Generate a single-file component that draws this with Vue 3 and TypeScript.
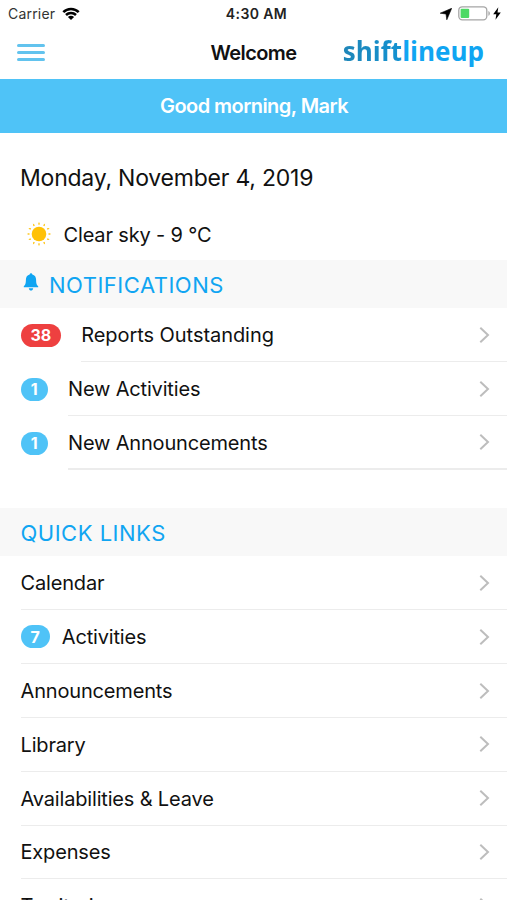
<script setup lang="ts">
interface LinkRow {
  label: string
  count?: number
  tone?: 'alert' | 'info'
}

const notifications: LinkRow[] = [
  { label: 'Reports Outstanding', count: 38, tone: 'alert' },
  { label: 'New Activities', count: 1, tone: 'info' },
  { label: 'New Announcements', count: 1, tone: 'info' },
]

const quickLinks: LinkRow[] = [
  { label: 'Calendar' },
  { label: 'Activities', count: 7, tone: 'info' },
  { label: 'Announcements' },
  { label: 'Library' },
  { label: 'Availabilities & Leave' },
  { label: 'Expenses' },
  { label: 'Territories' },
]

const rays = Array.from({ length: 12 }, (_, i) => i * 30)
</script>

<template>
  <div class="screen">
    <header class="top">
      <div class="status">
        <div class="status-left">
          <span class="carrier">Carrier</span>
          <svg class="wifi" width="18" height="14" viewBox="0 0 18 14">
            <g fill="none" stroke="#000" stroke-width="2.5">
              <path d="M1.3 5.2C5.5.9 12.500.9 16.700 5.200" />
              <path d="M4 8C6.800 5.200 11.200 5.200 14 8" />
            </g>
            <path d="M9 13L5.900 9.900C7.700 8.300 10.300 8.300 12.100 9.900Z" fill="#000" />
          </svg>
        </div>
        <span class="clock">4:30 AM</span>
        <div class="status-right">
          <svg width="12" height="12" viewBox="0 0 12 12"><path d="M11.700.3L6.800 11.800L6 6L.2 5.200Z" fill="#000" stroke="#000" stroke-width=".6" stroke-linejoin="round" /></svg>
          <svg class="battery" width="33" height="15" viewBox="0 0 33 15">
            <rect x=".8" y=".8" width="28" height="13" rx="3.500" fill="#fff" stroke="#a5a5a5" stroke-width="1.300" />
            <rect x="2.600" y="2.700" width="8.600" height="9.200" rx="1" fill="#4cd964" />
            <path d="M30.400 5v4.800c2-.8 2-4 0-4.800z" fill="#a5a5a5" />
          </svg>
          <svg class="bolt" width="8" height="13" viewBox="0 0 8 13"><path d="M5.300.3L.2 7.200H3.300L2.500 12.700L7.800 5.400H4.500Z" fill="#000" /></svg>
        </div>
      </div>
      <nav class="nav">
        <button class="menu" aria-label="Menu"><i /><i /><i /></button>
        <h1 class="title">Welcome</h1>
        <div class="brand"><span class="brand-a">shift</span><span class="brand-b">lineup</span></div>
      </nav>
    </header>

    <div class="greeting"><span>Good morning, Mark</span></div>

    <section class="today">
      <div class="date">Monday, November 4, 2019</div>
      <div class="weather">
        <svg width="26" height="26" viewBox="-13 -13 26 26">
          <circle r="7.300" fill="#ffc107" />
          <path v-for="a in rays" :key="a" d="M0-12.200L1-9.600H-1Z" fill="#ffc107" :transform="`rotate(${a})`" />
        </svg>
        <span class="weather-text">Clear sky - 9 °C</span>
      </div>
    </section>

    <h2 class="heading">
      <svg class="bell" width="16" height="18" viewBox="0 0 16 18">
        <path d="M8 .3C7.200.3 6.700.9 6.700 1.600C4.200 2.200 2.900 4.200 2.900 6.800C2.900 10.800 2.200 12 .8 13.200V14.300H15.200V13.200C13.800 12 13.100 10.800 13.100 6.800C13.100 4.200 11.800 2.200 9.300 1.600C9.300.9 8.800.3 8 .3ZM5.800 15.200C6 16.700 6.900 17.500 8 17.500S10 16.700 10.200 15.200Z" fill="#10a5f2" />
      </svg>
      <span>Notifications</span>
    </h2>
    <ul class="list notices">
      <li v-for="row in notifications" :key="row.label" class="row">
        <span class="badge" :class="row.tone">{{ row.count }}</span>
        <div class="body">
          <span class="label">{{ row.label }}</span>
          <svg class="chevron" width="11" height="18" viewBox="0 0 11 18"><path d="M1.300 1.700L9 9L1.300 16.300" /></svg>
        </div>
      </li>
    </ul>

    <h2 class="heading"><span>Quick Links</span></h2>
    <ul class="list links">
      <li v-for="row in quickLinks" :key="row.label" class="row">
        <div class="body">
          <span v-if="row.count" class="badge" :class="row.tone">{{ row.count }}</span>
          <span class="label">{{ row.label }}</span>
          <svg class="chevron" width="11" height="18" viewBox="0 0 11 18"><path d="M1.300 1.700L9 9L1.300 16.300" /></svg>
        </div>
      </li>
    </ul>
  </div>
</template>

<style>
body {
  background: #fff;
}
</style>

<style scoped>
.screen {
  height: 900px;
  overflow: hidden;
  background: #fff;
  color: #111;
  font-family: Inter, "Liberation Sans", sans-serif;
  white-space: nowrap;
}
svg {
  display: block;
  flex: none;
}
.top {
  height: 79px;
}
.status {
  display: grid;
  grid-template-columns: 1fr auto 1fr;
  align-items: center;
  height: 27px;
  padding: 0 6px 0 8px;
}
.status-left,
.status-right {
  display: flex;
  align-items: center;
}
.status-left {
  gap: 7px;
}
.status-right {
  justify-content: flex-end;
  gap: 5px;
}
.battery {
  margin-left: 1px;
}
.bolt {
  margin-left: -3px;
}
.carrier {
  font-size: 14px;
  letter-spacing: 0.2px;
  color: #333;
}
.clock {
  padding-left: 4px;
  font-size: 14px;
  font-weight: 600;
  letter-spacing: 0.4px;
  color: #222;
}
.nav {
  display: grid;
  grid-template-columns: 1fr auto 1fr;
  align-items: center;
  height: 51px;
  padding: 0 23px 0 17px;
}
.menu {
  display: flex;
  flex-direction: column;
  gap: 4.700px;
  width: 28px;
  padding: 0;
  border: 0;
  background: none;
}
.menu i {
  height: 2.500px;
  border-radius: 2px;
  background: #62c3ee;
}
.title {
  margin: 0;
  padding-left: 6px;
  font-size: 20px;
  font-weight: 600;
  letter-spacing: -0.6px;
}
.brand {
  justify-self: end;
  margin-top: -4px;
  font-family: "Open Sans", sans-serif;
  font-size: 26px;
  font-weight: 700;
  line-height: 36px;
}
.brand-a {
  background: linear-gradient(90deg, #1f86b8, #1292d2);
  background-clip: text;
  color: transparent;
}
.brand-b {
  color: #10a5f2;
}
.greeting {
  display: flex;
  align-items: center;
  justify-content: center;
  height: 54px;
  background: #4fc3f7;
  color: #fff;
  font-size: 20px;
  font-weight: 600;
}
.greeting span {
  padding-left: 1px;
  letter-spacing: -0.55px;
}
.today {
  height: 127px;
}
.date {
  padding: 30px 20px 0;
  font-size: 23px;
  letter-spacing: -0.22px;
  line-height: 30px;
}
.weather {
  display: flex;
  align-items: center;
  gap: 12px;
  padding: 28px 25.500px 0;
  font-size: 20px;
  letter-spacing: -0.15px;
}
.weather-text {
  padding-top: 1px;
}
.heading {
  display: flex;
  align-items: center;
  height: 48px;
  margin: 0;
  padding: 2px 20.500px 0;
  box-sizing: border-box;
  background: #f8f8f8;
  color: #10a5f2;
  font-size: 22px;
  font-weight: 400;
  letter-spacing: 0.5px;
  text-transform: uppercase;
}
.bell {
  margin: -7px 10px 0 2.500px;
}
.list {
  margin: 0;
  padding: 0;
  list-style: none;
}
.notices {
  height: 199.400px;
  padding-top: 0.600px;
}
.links {
  padding-top: 0.600px;
}
.row {
  display: flex;
  align-items: center;
  height: 53.800px;
  padding-left: 20.500px;
}
.notices .row {
  gap: 20px;
}
.body {
  display: flex;
  flex: 1;
  align-items: center;
  height: 100%;
  padding-right: 17px;
  border-bottom: 1.500px solid #ececec;
  box-sizing: border-box;
}
.notices .row:last-child .body {
  border-bottom-width: 2px;
}
.label {
  flex: 1;
  padding-top: 1px;
  font-size: 20px;
  letter-spacing: -0.17px;
}
.notices .row:first-child .label {
  letter-spacing: -0.06px;
}
.badge {
  display: flex;
  align-items: center;
  justify-content: center;
  height: 23px;
  padding: 0 10px;
  border-radius: 12px;
  color: #fff;
  font-size: 16px;
  font-weight: 700;
}
.links .badge {
  margin-right: 12px;
}
.alert {
  background: #ee4040;
}
.info {
  background: #4fc3f7;
}
.notices .info {
  min-width: 27.500px;
  padding: 0;
}
.chevron path {
  fill: none;
  stroke: #bdbdbd;
  stroke-width: 2;
}
</style>
